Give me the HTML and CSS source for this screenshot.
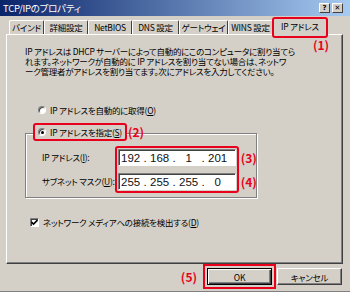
FILE: index.html
```html
<!DOCTYPE html>
<html lang="ja">
<head>
    <meta charset="UTF-8">
    <title>TCP/IPのプロパティ</title>
    <link rel="stylesheet" href="styles.css">
</head>
<body>
    <div class="window">
        <div class="titlebar">
            <span class="title">TCP/IPのプロパティ</span>
            <div class="title-btns">
                <span class="tbtn">?</span>
                <span class="tbtn">&#x2715;</span>
            </div>
        </div>
        <div class="content">
            <div class="tabs">
                <span class="tab">バインド</span>
                <span class="tab">詳細設定</span>
                <span class="tab">NetBIOS</span>
                <span class="tab">DNS 設定</span>
                <span class="tab">ゲートウェイ</span>
                <span class="tab">WINS 設定</span>
                <span class="tab active">IP アドレス</span>
            </div>
            <div class="panel">
                <span class="note note-1">(1)</span>
                <p class="desc">IP アドレスは DHCP サーバーによって自動的にこのコンピュータに割り当てら<br>れます。ネットワークが自動的に IP アドレスを割り当てない場合は、ネットワ<br>ーク管理者がアドレスを割り当てます。次にアドレスを入力してください。</p>
                <div class="radio-row auto"><span class="radio"></span><span>IP アドレスを自動的に取得(<u>O</u>)</span></div>
                <div class="legend-row">
                    <div class="radio-row picked"><span class="radio on"></span><span>IP アドレスを指定(<u>S</u>)</span></div>
                    <span class="note">(2)</span>
                </div>
                <div class="group">
                    <div class="labels">
                        <span>IP アドレス(<u>I</u>):</span>
                        <span>サブネット マスク(<u>U</u>):</span>
                    </div>
                    <div class="ipbox">
                        <div class="ip"><span class="seg">192</span><span class="dot">.</span><span class="seg">168</span><span class="dot">.</span><span class="seg">1</span><span class="dot">.</span><span class="seg">201</span></div>
                        <div class="ip"><span class="seg">255</span><span class="dot">.</span><span class="seg">255</span><span class="dot">.</span><span class="seg">255</span><span class="dot">.</span><span class="seg">0</span></div>
                    </div>
                    <div class="notes">
                        <span class="note">(3)</span>
                        <span class="note">(4)</span>
                    </div>
                </div>
                <div class="check-row">
                    <span class="check"><svg width="7" height="7" viewBox="0 0 7 7"><path d="M0.5 3 L2.5 5 L6.5 1" fill="none" stroke="#000" stroke-width="1.6"/></svg></span>
                    <span>ネットワーク メディアへの接続を検出する(<u>D</u>)</span>
                </div>
            </div>
            <div class="buttons">
                <span class="note">(5)</span>
                <button class="btn default">OK</button>
                <button class="btn">キャンセル</button>
            </div>
        </div>
    </div>
</body>
</html>
```

FILE: styles.css
```css
*{
    margin: 0;
    padding: 0;
    box-sizing: border-box;
}
body{
    width: 350px;
    height: 292px;
    overflow: hidden;
    background: #d4d0c8;
    color: #000;
    font-family: "Noto Sans CJK JP", sans-serif;
    font-size: 8.5px;
    letter-spacing: -0.25px;
    font-feature-settings: "palt";
}
.window{
    height: 292px;
    border-bottom: 1px solid #808080;
}
.titlebar{
    height: 16px;
    display: flex;
    align-items: center;
    justify-content: space-between;
    padding: 0 7px 0 3px;
    background: linear-gradient(to right, #0a246a, #a6caf0);
    color: #fff;
}
.title{
    font-size: 9.5px;
    line-height: 16px;
}
.title-btns{
    display: flex;
    gap: 2px;
}
.tbtn{
    width: 11px;
    height: 10px;
    display: flex;
    align-items: center;
    justify-content: center;
    background: #d4d0c8;
    border: 1px solid;
    border-color: #fff #404040 #404040 #fff;
    color: #000;
    font: bold 7px/7px "DejaVu Sans", sans-serif;
    letter-spacing: 0;
}
.content{
    padding: 2px 7px 0 6px;
}
.tabs{
    display: flex;
    align-items: flex-end;
    height: 16px;
    margin-left: 3px;
}
.tab{
    height: 14px;
    border: 1px solid;
    border-bottom: 0;
    border-color: #fff #404040 transparent #fff;
    border-radius: 2px 2px 0 0;
    text-align: center;
    line-height: 12px;
    white-space: nowrap;
}
.tab:nth-child(1){ width: 35px; }
.tab:nth-child(2){ width: 44px; }
.tab:nth-child(3){ width: 44px; }
.tab:nth-child(4){ width: 47px; }
.tab:nth-child(5){ width: 49px; }
.tab:nth-child(6){ width: 45px; }
.tab.active{
    width: 54px;
    height: 17px;
    margin-bottom: -1px;
    position: relative;
    z-index: 1;
    background: #d4d0c8;
    line-height: 14px;
}
.tab.active::after{
    content: "";
    position: absolute;
    left: -2px;
    right: -2px;
    top: -2px;
    bottom: -3px;
    border: 2px solid #e8001c;
    border-radius: 3px;
}
.panel{
    position: relative;
    height: 230px;
    border: 1px solid;
    border-color: #fff #404040 #404040 #fff;
    box-shadow: inset -1px -1px 0 #808080;
    padding-top: 11px;
}
.note{
    color: #e8001c;
    font-weight: bold;
    font-size: 12px;
    line-height: 12px;
    letter-spacing: 0;
}
.note-1{
    position: absolute;
    left: 306px;
    top: 4px;
}
.desc{
    margin-left: 18px;
    line-height: 10px;
    white-space: nowrap;
}
.radio-row{
    display: flex;
    align-items: center;
    gap: 4px;
    line-height: 10px;
    white-space: nowrap;
}
.radio{
    width: 8px;
    height: 8px;
    border-radius: 50%;
    background: #fff;
    border: 1px solid;
    border-color: #808080 #fff #fff #808080;
    box-shadow: inset 1px 1px 0 #404040;
    display: flex;
    align-items: center;
    justify-content: center;
}
.radio.on::after{
    content: "";
    width: 3px;
    height: 3px;
    border-radius: 50%;
    background: #000;
}
.auto{
    margin: 29px 0 0 31px;
}
.legend-row{
    display: flex;
    align-items: center;
    gap: 1px;
    margin: 8px 0 0 26px;
    position: relative;
    z-index: 1;
}
.picked{
    height: 18px;
    padding: 0 3px 0 3px;
    border: 2px solid #e8001c;
    border-radius: 3px;
    background: #d4d0c8;
}
.group{
    display: flex;
    align-items: flex-start;
    width: 232px;
    height: 65px;
    margin: -8px 0 0 18px;
    padding: 12px 0 0 16px;
    border: 1px solid #808080;
    box-shadow: 1px 1px 0 #fff, inset 1px 1px 0 #fff;
}
.labels{
    width: 81px;
    margin-top: 3px;
    display: flex;
    flex-direction: column;
    gap: 7px;
    white-space: nowrap;
}
.labels span{
    line-height: 17px;
}
.ipbox{
    display: flex;
    flex-direction: column;
    gap: 7px;
    padding: 1px;
    border: 2px solid #e8001c;
    border-radius: 3px;
}
.ip{
    width: 118px;
    height: 17px;
    display: flex;
    align-items: center;
    padding-left: 1px;
    background: #fff;
    border: 1px solid;
    border-color: #808080 #fff #fff #808080;
    box-shadow: inset 1px 1px 0 #404040;
    font-family: "Liberation Sans", sans-serif;
    font-size: 11.5px;
    letter-spacing: 0;
    color: #111;
}
.seg{
    width: 22px;
    text-align: center;
}
.dot{
    width: 7px;
    text-align: center;
}
.notes{
    display: flex;
    flex-direction: column;
    gap: 7px;
    margin: 3px 0 0 2px;
}
.notes .note{
    line-height: 17px;
}
.check-row{
    display: flex;
    align-items: center;
    gap: 4px;
    margin: 19px 0 0 23px;
    line-height: 11px;
    white-space: nowrap;
}
.check{
    width: 9px;
    height: 9px;
    display: flex;
    align-items: center;
    justify-content: center;
    background: #fff;
    border: 1px solid;
    border-color: #808080 #fff #fff #808080;
    box-shadow: inset 1px 1px 0 #404040;
}
.buttons{
    display: flex;
    justify-content: flex-end;
    align-items: center;
    gap: 5px;
    margin-top: 4px;
    padding-right: 1px;
}
.buttons .note{
    margin-right: 5px;
}
.btn{
    width: 65px;
    height: 17px;
    background: #d4d0c8;
    border: 1px solid;
    border-color: #fff #404040 #404040 #fff;
    box-shadow: inset -1px -1px 0 #808080;
    font: inherit;
    letter-spacing: inherit;
    font-feature-settings: "palt";
    color: #000;
}
.btn.default{
    border-color: #000;
    box-shadow: inset 1px 1px 0 #fff, inset -1px -1px 0 #404040, inset -2px -2px 0 #808080;
    outline: 2px solid #e8001c;
    outline-offset: 2px;
}
```
